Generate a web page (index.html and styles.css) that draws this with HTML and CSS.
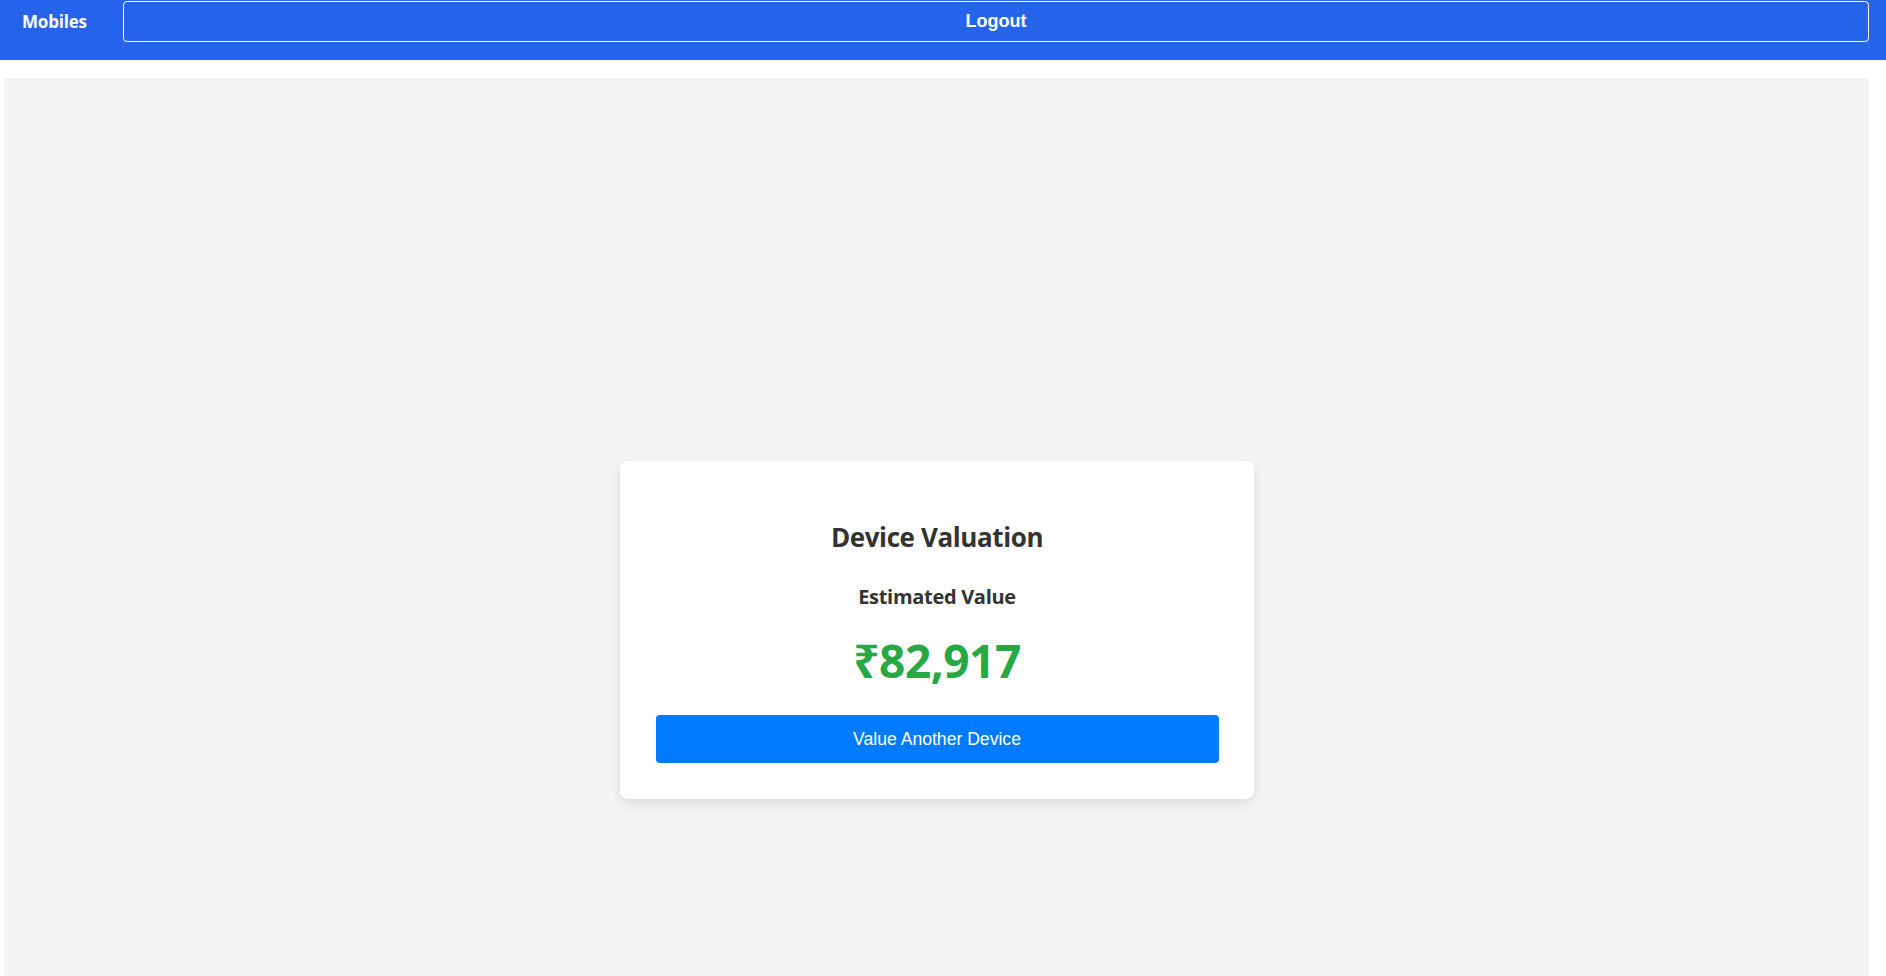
FILE: index.html
```html
<!DOCTYPE html>
<html lang="en">
<head>
<meta charset="utf-8">
<title>Device Valuation</title>
<link rel="stylesheet" href="styles.css">
</head>
<body>
<header class="topbar">
  <div class="brand">Mobiles</div>
  <button class="logout">Logout</button>
</header>
<main class="content">
  <section class="card">
    <h2 class="card-title">Device Valuation</h2>
    <h3 class="card-sub">Estimated Value</h3>
    <p class="price">₹82,917</p>
    <button class="primary">Value Another Device</button>
  </section>
</main>
</body>
</html>
```
FILE: styles.css
```css
* { box-sizing: border-box; }
html, body { margin: 0; padding: 0; }
body {
  font-family: "Open Sans", "Noto Sans", sans-serif;
  background: #ffffff;
  color: #333333;
  height: 976px;
  overflow: hidden;
}
.topbar {
  display: flex;
  align-items: flex-start;
  height: 60px;
  background: #2563eb;
  padding-right: 17px;
}
.brand {
  width: 123px;
  height: 43px;
  padding-left: 22px;
  display: flex;
  align-items: center;
  color: #ffffff;
  font-weight: 700;
  font-size: 17px;
  letter-spacing: -0.2px;
}
.logout {
  flex: 1;
  margin-top: 1px;
  height: 41px;
  background: transparent;
  border: 1px solid #ffffff;
  border-radius: 4px;
  color: #ffffff;
  font-family: "Liberation Sans", Arial, sans-serif;
  font-weight: 700;
  font-size: 18px;
  padding: 0;
}
.content {
  margin: 18px 17px 0 4px;
  background: #f4f4f4;
  height: 898px;
  display: flex;
  justify-content: center;
  align-items: flex-start;
  padding-top: 383px;
}
.card {
  width: 634px;
  height: 338px;
  background: #ffffff;
  border-radius: 8px;
  box-shadow: 0 4px 12px rgba(0, 0, 0, 0.1);
  padding: 58px 35px 36px 36px;
  display: flex;
  flex-direction: column;
  align-items: stretch;
  text-align: center;
}
.card-title {
  margin: 0;
  font-size: 26px;
  font-weight: 700;
  line-height: 36px;
  letter-spacing: -0.4px;
  color: #333333;
}
.card-sub {
  margin: 28px 0 0;
  font-size: 20px;
  font-weight: 700;
  line-height: 28px;
  letter-spacing: -0.3px;
  color: #333333;
}
.price {
  margin: 23px 0 0;
  font-size: 46px;
  font-weight: 700;
  line-height: 52px;
  color: #28a745;
  letter-spacing: -0.5px;
}
.primary {
  margin-top: 29px;
  height: 48px;
  flex: none;
  background: #007bff;
  border: none;
  border-radius: 4px;
  color: #ffffff;
  font-family: "Liberation Sans", Arial, sans-serif;
  font-size: 17.6px;
  padding: 0;
}
```
